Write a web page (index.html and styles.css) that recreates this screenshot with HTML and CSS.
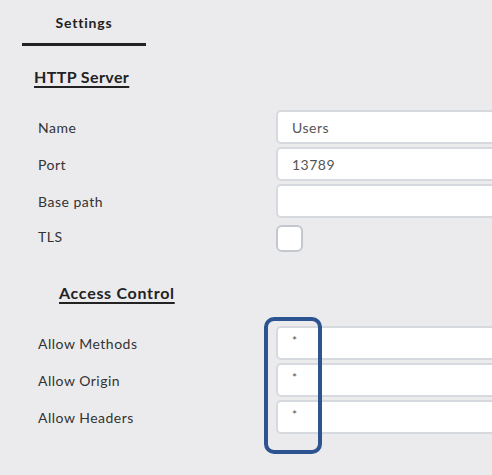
FILE: index.html
```html
<!DOCTYPE html>
<html>
<head>
<meta charset="utf-8">
<link rel="stylesheet" href="styles.css">
</head>
<body>
<div class="tabs">
  <div class="tab">Settings</div>
</div>
<h2 class="section-title">HTTP Server</h2>
<div class="form">
  <label class="label">Name</label>
  <div class="field"><input class="input" type="text" value="Users"></div>
  <label class="label">Port</label>
  <div class="field"><input class="input" type="text" value="13789"></div>
  <label class="label">Base path</label>
  <div class="field"><input class="input" type="text" value=""></div>
  <label class="label">TLS</label>
  <div class="field"><span class="checkbox"></span></div>
</div>
<h3 class="sub-title">Access Control</h3>
<div class="access">
  <div class="form form-access">
    <label class="label">Allow Methods</label>
    <div class="field"><input class="input star" type="text" value="*"></div>
    <label class="label">Allow Origin</label>
    <div class="field"><input class="input star" type="text" value="*"></div>
    <label class="label">Allow Headers</label>
    <div class="field"><input class="input star" type="text" value="*"></div>
  </div>
  <div class="highlight"></div>
</div>
</body>
</html>
```
FILE: styles.css
```css
html {
  overflow: hidden;
  background: #ebebed;
}
body {
  margin: 0;
  padding: 0;
  min-height: 475px;
  background: #ebebed;
  font-family: Lato, "Noto Sans", sans-serif;
  color: #2b2b2b;
}
.tabs {
  padding-left: 22px;
}
.tab {
  width: 124px;
  height: 46px;
  box-sizing: border-box;
  padding-top: 14px;
  text-align: center;
  font-size: 14px;
  font-weight: 700;
  letter-spacing: 0.8px;
  color: #222;
  border-bottom: 3px solid #222;
}
.section-title {
  margin: 21px 0 0 34px;
  font-size: 16px;
  font-weight: 700;
  letter-spacing: 0.4px;
  line-height: 20px;
  text-decoration: underline;
  text-underline-offset: 3px;
  text-decoration-thickness: 2px;
  color: #222;
}
.form {
  display: grid;
  grid-template-columns: 238px 222px;
  row-gap: 3px;
  padding-left: 38px;
  margin-top: 23px;
}
.label {
  display: flex;
  align-items: center;
  font-size: 14px;
  letter-spacing: 0.5px;
  color: #333;
}
.field {
  display: flex;
  align-items: center;
}
.input {
  width: 222px;
  height: 34px;
  box-sizing: border-box;
  border: 2px solid #d6d9de;
  border-radius: 5px;
  background: #fff;
  padding: 0 14px;
  font-family: Lato, "Noto Sans", sans-serif;
  font-size: 14px;
  letter-spacing: 0.5px;
  color: #555;
  outline: none;
}
.star {
  padding-bottom: 6px;
  font-size: 12px;
}
.checkbox {
  display: block;
  width: 27px;
  height: 27px;
  margin-top: 4px;
  box-sizing: border-box;
  border: 2px solid #c3c8cf;
  border-radius: 6px;
  background: #fff;
}
.sub-title {
  margin: 31px 0 0 59px;
  font-size: 16px;
  font-weight: 700;
  letter-spacing: 0.7px;
  line-height: 20px;
  text-decoration: underline;
  text-underline-offset: 3px;
  text-decoration-thickness: 2px;
  color: #222;
}
.access {
  position: relative;
  padding-bottom: 30px;
}
.form-access {
  margin-top: 23px;
}
.highlight {
  position: absolute;
  left: 264px;
  top: -9px;
  width: 58px;
  height: 137px;
  box-sizing: border-box;
  border: 4px solid #2c5491;
  border-radius: 10px;
}
```
